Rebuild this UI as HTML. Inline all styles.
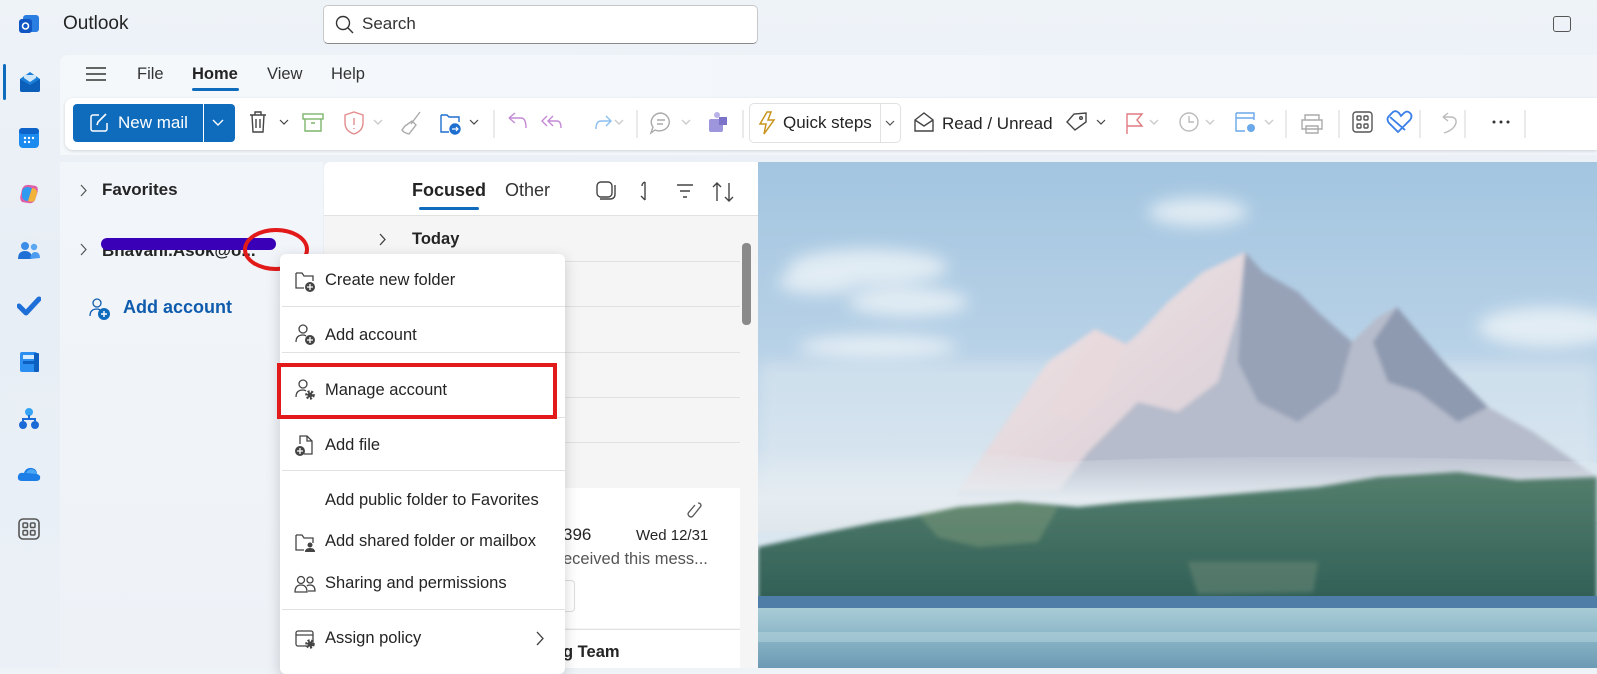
<!DOCTYPE html>
<html><head><meta charset="utf-8"><style>
*{box-sizing:border-box;margin:0;padding:0}
body{width:1597px;height:668px;overflow:hidden;position:relative;font-family:"Segoe UI","Liberation Sans",sans-serif;background:linear-gradient(180deg,#eef3f8,#e8eef5 40%,#eaf0f6);color:#242424}
.abs{position:absolute}
.rail svg{position:absolute}
.menu{left:280px;top:254px;width:285px;height:420px;background:#fff;border-radius:6px;box-shadow:0 4px 14px rgba(0,0,0,.18);}
.mi{position:absolute;left:0;width:285px;font-size:16.5px;color:#242424}
.mi span{position:absolute;left:45px}
.sep{position:absolute;left:2px;width:283px;height:1px;background:#e1e1e1}
.ic{position:absolute;left:14px}
</style></head><body>
<div class="abs" style="left:18px;top:14px;width:22px;height:22px">
<svg width="22" height="22"><rect x="5" y="1" width="16" height="17" rx="3" fill="#2a7de1"/><rect x="1" y="5" width="13" height="14" rx="3" fill="#0f56c2"/><circle cx="7.5" cy="12" r="3" fill="none" stroke="#fff" stroke-width="1.6"/></svg></div>
<div class="abs" style="left:63px;top:13px;font-size:19px;color:#242424">Outlook</div>
<div class="abs" style="left:323px;top:5px;width:435px;height:39px;background:#fff;border:1px solid #c8c8c8;border-bottom-color:#8a8a8a;border-radius:5px">
<svg class="abs" style="left:11px;top:9px" width="20" height="20"><circle cx="8" cy="8" r="6.5" fill="none" stroke="#333" stroke-width="1.4"/><line x1="12.8" y1="12.8" x2="18" y2="18" stroke="#333" stroke-width="1.4"/></svg>
<div class="abs" style="left:38px;top:8px;font-size:17px;color:#333">Search</div></div>
<div class="abs" style="left:1553px;top:16px;width:18px;height:16px;border:1.5px solid #555;border-radius:3px"></div>

<div class="rail">
<div class="abs" style="left:3px;top:64px;width:3px;height:36px;background:#0f6cbd;border-radius:2px"></div>
<svg style="left:18px;top:70px" width="24" height="24"><path d="M2 9 L12 2 L22 9 V20 a2 2 0 0 1-2 2 H4 a2 2 0 0 1-2-2Z" fill="#1a7fd8"/><path d="M2 9 L12 15 L22 9 V20 a2 2 0 0 1-2 2 H4 a2 2 0 0 1-2-2Z" fill="#0c5fb8"/><path d="M6 8 L12 12 L18 8 V5 H6Z" fill="#cfe6fb"/></svg>
<svg style="left:18px;top:127px" width="22" height="22"><rect x="1" y="1" width="20" height="20" rx="4" fill="#1c8bf0"/><rect x="1" y="1" width="20" height="6" rx="3" fill="#0d63c8"/><g fill="#fff"><circle cx="7" cy="11" r="1.2"/><circle cx="11" cy="11" r="1.2"/><circle cx="15" cy="11" r="1.2"/><circle cx="7" cy="15" r="1.2"/><circle cx="11" cy="15" r="1.2"/></g></svg>
<svg style="left:18px;top:183px" width="22" height="22"><path d="M4 6 Q6 1 12 2 L18 3 Q21 5 19 11 L17 17 Q15 21 10 20 L4 19 Q1 16 3 11Z" fill="#e05da8"/><path d="M4 10 Q4 4 10 4 L14 5 L10 18 Q5 18 4 14Z" fill="#2f9bf0"/><path d="M14 5 Q19 5 19 10 L17 17 Q15 20 10 18Z" fill="#f1b33b"/></svg>
<svg style="left:17px;top:240px" width="24" height="22"><circle cx="8" cy="6" r="4" fill="#3b8de8"/><circle cx="17" cy="7" r="3.2" fill="#5aa7f2"/><path d="M1 19 Q1 11 8 11 Q15 11 15 19Z" fill="#1e6fd6"/><path d="M13 19 Q14 12 18 12 Q23 12 23 18Z" fill="#4b9cf0"/></svg>
<svg style="left:17px;top:295px" width="24" height="22"><path d="M2 11 L9 18 L22 4" fill="none" stroke="#1f6fd9" stroke-width="5" stroke-linecap="round" stroke-linejoin="round"/></svg>
<svg style="left:19px;top:350px" width="22" height="24"><rect x="1" y="2" width="17" height="20" rx="2" fill="#2a8ff0"/><rect x="4" y="5" width="11" height="4" fill="#d7ecff"/><rect x="4" y="11" width="11" height="3" fill="#0d5fc0"/><rect x="15" y="3" width="5" height="19" rx="1" fill="#0d5fc0"/></svg>
<svg style="left:18px;top:407px" width="22" height="24"><circle cx="11" cy="5" r="4" fill="#36a3f5"/><circle cx="5" cy="18" r="4" fill="#1b6ad6"/><circle cx="17" cy="18" r="4" fill="#1b6ad6"/><path d="M11 8 V12 M5 14 V12 H17 V14" stroke="#1b6ad6" stroke-width="2" fill="none"/></svg>
<svg style="left:17px;top:466px" width="24" height="16"><path d="M5 15 Q0 15 1 10 Q2 6 7 7 Q9 1 15 2 Q20 3 20 8 Q24 9 23 13 Q22 15 19 15Z" fill="#1c7ee6"/><path d="M9 7 Q11 3 15 3 Q19 4 20 8" fill="#4aa7f5"/></svg>
<svg style="left:18px;top:518px" width="22" height="22"><rect x="1" y="1" width="20" height="20" rx="4" fill="none" stroke="#555" stroke-width="1.6"/><g fill="none" stroke="#555" stroke-width="1.5"><rect x="5" y="5" width="4.5" height="4.5" rx="1"/><rect x="12.5" y="5" width="4.5" height="4.5" rx="1"/><rect x="5" y="12.5" width="4.5" height="4.5" rx="1"/><rect x="12.5" y="12.5" width="4.5" height="4.5" rx="1"/></g></svg>
</div>

<div class="abs" style="left:60px;top:55px;width:1537px;height:100px;background:linear-gradient(90deg,#f5f8fb,#f1f5fa);border-radius:8px 0 0 0"></div>
<svg class="abs" style="left:85px;top:66px" width="22" height="16"><g stroke="#333" stroke-width="1.5"><line x1="1" y1="2" x2="21" y2="2"/><line x1="1" y1="8" x2="21" y2="8"/><line x1="1" y1="14" x2="21" y2="14"/></g></svg>
<div class="abs" style="left:137px;top:65px;font-size:16.5px;color:#333">File</div>
<div class="abs" style="left:192px;top:65px;font-size:16.5px;font-weight:bold;color:#242424">Home</div>
<div class="abs" style="left:192px;top:88px;width:47px;height:3px;background:#0f6cbd;border-radius:2px"></div>
<div class="abs" style="left:267px;top:65px;font-size:16.5px;color:#333">View</div>
<div class="abs" style="left:331px;top:65px;font-size:16.5px;color:#333">Help</div>

<div class="abs" style="left:65px;top:98px;width:1532px;height:52px;background:#fff;border-radius:8px 0 0 8px;box-shadow:0 1px 3px rgba(0,0,0,.15)"></div>
<div class="abs" style="left:73px;top:104px;width:162px;height:38px;background:#0f6cbd;border-radius:4px"></div>
<div class="abs" style="left:203px;top:104px;width:1px;height:38px;background:#fff"></div>
<svg class="abs" style="left:89px;top:113px" width="20" height="20"><path d="M10 2 H4 a2 2 0 0 0-2 2 V16 a2 2 0 0 0 2 2 H16 a2 2 0 0 0 2-2 V10" fill="none" stroke="#fff" stroke-width="1.5"/><path d="M8 12 L9 9 L17 1" stroke="#fff" stroke-width="1.6" fill="none"/></svg>
<div class="abs" style="left:118px;top:113px;font-size:17px;color:#fff">New mail</div>
<svg class="abs" style="left:212px;top:119px" width="12" height="8"><path d="M1 1 L6 6 L11 1" stroke="#fff" stroke-width="1.4" fill="none"/></svg>

<svg class="abs" style="left:245px;top:108px" width="510" height="32" fill="none" stroke-width="1.4">
<g stroke="#444"><path d="M5 7 H21 M10 7 V4 H16 V7 M7 7 L8 24 H18 L19 7 M11 11 V20 M15 11 V20"/><path d="M35 12 L39 16 L43 12" stroke-width="1.2"/></g>
<g stroke="#7cb66c"><rect x="58" y="6" width="20" height="5"/><path d="M60 11 V23 H76 V11 M66 15 H70"/></g>
<g stroke="#e38d8d"><path d="M100 7 L109 4 L118 7 V15 Q118 23 109 26 Q100 23 100 15Z"/><path d="M109 10 V17 M109 20 V21"/></g>
<path d="M129 12 L133 16 L137 12" stroke="#ccc"/>
<g stroke="#aaa"><path d="M175 4 L166 16 M160 18 L167 13 L171 17 L164 26 Q159 25 157 22Z"/></g>
<g stroke="#1f6fd0"><path d="M196 7 H202 L204 9 H214 V14 M196 7 V24 H204"/><circle cx="210" cy="21" r="5" fill="#1f6fd0"/><path d="M207 21 H213 M211 19 L213 21 L211 23" stroke="#fff" stroke-width="1.2"/></g>
<path d="M225 12 L229 16 L233 12" stroke="#444" stroke-width="1.2"/>
<line x1="249" y1="2" x2="249" y2="30" stroke="#e0e0e0"/>
<g stroke="#c48ad6"><path d="M264 10 L270 5 M264 10 L270 15 M264 10 H276 Q281 10 281 20"/><path d="M302 8 L297 13 L302 18 M308 8 L303 13 L308 18 M303 13 H312 Q316 13 316 20"/></g>
<g stroke="#8cbff0"><path d="M361 8 L366 13 L361 18 M366 13 H356 Q351 13 351 21"/></g>
<path d="M370 12 L374 16 L378 12" stroke="#ccc"/>
<line x1="392" y1="2" x2="392" y2="30" stroke="#e0e0e0"/>
<g stroke="#aaa"><path d="M416 5 A10 9 0 1 1 410 22 L406 25 L408 19 A10 9 0 0 1 416 5Z M412 12 H420 M412 16 H418"/></g>
<path d="M437 12 L441 16 L445 12" stroke="#ccc"/>
<g><circle cx="472" cy="7" r="3" fill="#b9b2e8"/><rect x="464" y="11" width="14" height="13" rx="2" fill="#9e96dc"/><rect x="474" y="9" width="8" height="8" fill="#7b72c9"/></g>
<line x1="498" y1="2" x2="498" y2="30" stroke="#e0e0e0"/>
</svg>
<div class="abs" style="left:749px;top:103px;width:152px;height:40px;border:1px solid #e1e1e1;border-radius:5px"></div>
<div class="abs" style="left:880px;top:103px;width:1px;height:40px;background:#e1e1e1"></div>
<svg class="abs" style="left:757px;top:111px" width="20" height="24"><path d="M10 1 L3 13 H9 L7 23 L17 9 H11 L14 1Z" fill="none" stroke="#c8941e" stroke-width="1.5"/></svg>
<div class="abs" style="left:783px;top:113px;font-size:17px;color:#242424">Quick steps</div>
<svg class="abs" style="left:885px;top:120px" width="10" height="7"><path d="M1 1 L5 5 L9 1" stroke="#555" stroke-width="1.2" fill="none"/></svg>
<svg class="abs" style="left:912px;top:110px" width="24" height="24"><path d="M3 10 L12 3 L21 10 V21 H3Z M3 10 L12 16 L21 10" fill="none" stroke="#444" stroke-width="1.4"/></svg>
<div class="abs" style="left:942px;top:114px;font-size:17px;color:#242424">Read / Unread</div>
<svg class="abs" style="left:1065px;top:108px" width="480" height="32" fill="none" stroke-width="1.4">
<path d="M10 22 L2 14 L9 6 L21 5 L21 14Z" stroke="#444"/><circle cx="16" cy="10" r="1.3" stroke="#444"/>
<path d="M32 12 L36 16 L40 12" stroke="#444" stroke-width="1.2"/>
<path d="M62 26 V6 H77 L72 12 L77 18 H62" stroke="#e07a82"/>
<path d="M85 12 L89 16 L93 12" stroke="#ccc"/>
<circle cx="124" cy="14" r="9" stroke="#bbb"/><path d="M124 8 V14 H129" stroke="#bbb"/>
<path d="M141 12 L145 16 L149 12" stroke="#ccc"/>
<path d="M171 5 H189 V12 M171 5 V23 H180 M171 10 H189" stroke="#6aa9ea"/><circle cx="186" cy="20" r="4" fill="#6aa9ea"/>
<path d="M200 12 L204 16 L208 12" stroke="#ccc"/>
<line x1="221" y1="2" x2="221" y2="30" stroke="#e0e0e0"/>
<path d="M240 12 V7 H254 V12 M237 12 H257 V21 H237Z M241 18 H253 V25 H241Z" stroke="#aaa"/>
<line x1="274" y1="2" x2="274" y2="30" stroke="#e0e0e0"/>
<rect x="288" y="4" width="19" height="20" rx="3" stroke="#555"/><g stroke="#555"><rect x="292" y="8" width="4" height="4" rx="1"/><rect x="299" y="8" width="4" height="4" rx="1"/><rect x="292" y="16" width="4" height="4" rx="1"/><rect x="299" y="16" width="4" height="4" rx="1"/></g>
<path d="M333 24 L324 15 Q321 11 324 8 L328 4 Q331 2 334 5 L336 8 L339 5 Q342 2 345 5 Q348 8 345 12Z M325 9 L340 22" stroke="#3a7ee8" stroke-width="1.8"/>
<line x1="355" y1="2" x2="355" y2="30" stroke="#e0e0e0"/>
<path d="M378 9 L383 5 M378 9 L383 13 M378 9 H385 Q392 9 391 15 Q389 22 379 25" stroke="#bbb"/>
<line x1="400" y1="2" x2="400" y2="30" stroke="#e0e0e0"/>
<g fill="#333" stroke="none"><circle cx="429" cy="14" r="1.5"/><circle cx="436" cy="14" r="1.5"/><circle cx="443" cy="14" r="1.5"/></g>
<line x1="460" y1="2" x2="460" y2="30" stroke="#e0e0e0"/>
</svg>

<div class="abs" style="left:60px;top:162px;width:263px;height:506px;background:linear-gradient(180deg,#f2f6fa,#eef2f7)"></div>
<svg class="abs" style="left:80px;top:184px" width="8" height="13"><path d="M1 1 L6 6.5 L1 12" stroke="#555" stroke-width="1.2" fill="none"/></svg>
<div class="abs" style="left:102px;top:180px;font-size:17px;font-weight:bold;color:#242424">Favorites</div>
<svg class="abs" style="left:80px;top:243px" width="8" height="13"><path d="M1 1 L6 6.5 L1 12" stroke="#555" stroke-width="1.2" fill="none"/></svg>
<div class="abs" style="left:102px;top:241px;font-size:17px;font-weight:bold;color:#242424">Bhavani.Asok@o...</div>
<div class="abs" style="left:101px;top:238px;width:175px;height:12px;background:#3a00b8;border-radius:6px"></div>
<div class="abs" style="left:243px;top:228px;width:66px;height:43px;border:4px solid #e21a1a;border-radius:50%"></div>
<svg class="abs" style="left:88px;top:297px" width="24" height="24"><circle cx="9" cy="6" r="4" fill="none" stroke="#0f5cad" stroke-width="1.3"/><path d="M2 19 Q2 12 9 12 Q11 12 12 13" fill="none" stroke="#0f5cad" stroke-width="1.3"/><circle cx="16" cy="17" r="6" fill="#0f6cbd"/><path d="M16 14 V20 M13 17 H19" stroke="#fff" stroke-width="1.4"/></svg>
<div class="abs" style="left:123px;top:297px;font-size:18px;font-weight:bold;color:#0f5cad">Add account</div>

<div class="abs" style="left:324px;top:162px;width:434px;height:506px;background:#f5f5f5;border-radius:6px 0 0 0"></div>
<div class="abs" style="left:324px;top:162px;width:434px;height:54px;background:#fff;border-bottom:1px solid #e1e1e1;border-radius:6px 0 0 0"></div>
<div class="abs" style="left:412px;top:180px;font-size:18px;font-weight:bold;color:#242424">Focused</div>
<div class="abs" style="left:419px;top:207px;width:60px;height:3px;background:#0f6cbd;border-radius:2px"></div>
<div class="abs" style="left:505px;top:180px;font-size:18px;color:#333">Other</div>
<svg class="abs" style="left:595px;top:180px" width="150" height="24" fill="none" stroke="#444" stroke-width="1.4"><rect x="2" y="2" width="15" height="15" rx="4"/><path d="M5 19 H15 Q20 19 20 14 V5"/><path d="M50 2 V20 M46 16 L50 20 M50 2 Q47 3 47 6" /><path d="M82 5 H98 M85 11 H95 M88 17 H92"/><path d="M122 3 V21 M118 7 L122 3 L126 7 M134 3 V21 M130 17 L134 21 L138 17"/></svg>
<svg class="abs" style="left:379px;top:233px" width="8" height="13"><path d="M1 1 L6 6.5 L1 12" stroke="#444" stroke-width="1.3" fill="none"/></svg>
<div class="abs" style="left:412px;top:230px;font-size:16.5px;font-weight:bold;color:#242424">Today</div>
<div class="abs" style="left:565px;top:261px;width:175px;height:1px;background:#e1e1e1"></div>
<div class="abs" style="left:565px;top:306px;width:175px;height:1px;background:#e1e1e1"></div>
<div class="abs" style="left:565px;top:352px;width:175px;height:1px;background:#e1e1e1"></div>
<div class="abs" style="left:565px;top:397px;width:175px;height:1px;background:#e1e1e1"></div>
<div class="abs" style="left:565px;top:442px;width:175px;height:1px;background:#e1e1e1"></div>
<div class="abs" style="left:742px;top:243px;width:9px;height:82px;background:#8a8a8a;border-radius:4px"></div>
<div class="abs" style="left:565px;top:488px;width:175px;height:140px;background:#fff"></div>
<div class="abs" style="left:565px;top:629px;width:175px;height:39px;background:#fff;border-top:1px solid #e1e1e1"></div>
<svg class="abs" style="left:684px;top:500px" width="20" height="20"><path d="M14 3 Q17 3 17 6 L9 16 Q7 18 5 16 Q3 14 5 12 L11 5" fill="none" stroke="#555" stroke-width="1.3"/></svg>
<div class="abs" style="left:563px;top:525px;font-size:17px;color:#242424">396</div>
<div class="abs" style="left:636px;top:527px;font-size:15px;color:#242424">Wed 12/31</div>
<div class="abs" style="left:563px;top:550px;font-size:16.5px;color:#555">eceived this mess...</div>
<div class="abs" style="left:560px;top:580px;width:15px;height:32px;border:1px solid #ddd;border-left:none;border-radius:0 4px 4px 0"></div>
<div class="abs" style="left:563px;top:643px;font-size:16.5px;font-weight:bold;color:#242424">g Team</div>

<svg class="abs" style="left:758px;top:162px" width="839" height="506" viewBox="0 0 839 506">
<defs>
<linearGradient id="sky" x1="0" y1="0" x2="0" y2="1"><stop offset="0" stop-color="#a3c5e0"/><stop offset=".45" stop-color="#bcd4e8"/><stop offset=".75" stop-color="#dbe7f0"/></linearGradient>
<linearGradient id="lf" x1="0" y1="0" x2="1" y2="1"><stop offset="0" stop-color="#f3e6e6"/><stop offset="1" stop-color="#d7cdd6"/></linearGradient>
<linearGradient id="lake" x1="0" y1="0" x2="0" y2="1"><stop offset="0" stop-color="#a9ccd6"/><stop offset=".4" stop-color="#8fb9c9"/><stop offset="1" stop-color="#6d9ab4"/></linearGradient>
<linearGradient id="fog" x1="0" y1="0" x2="0" y2="1"><stop offset="0" stop-color="#e6edf2" stop-opacity="0"/><stop offset=".6" stop-color="#e6edf2" stop-opacity=".95"/><stop offset="1" stop-color="#dfe7ec"/></linearGradient>
<linearGradient id="for" x1="0" y1="0" x2="0" y2="1"><stop offset="0" stop-color="#557f6e"/><stop offset="1" stop-color="#2f5e55"/></linearGradient>
<filter id="bl"><feGaussianBlur stdDeviation="8"/></filter>
<filter id="bl2"><feGaussianBlur stdDeviation="2"/></filter>
</defs>
<rect width="839" height="506" fill="url(#sky)"/>
<g fill="#eef4f8" opacity=".8" filter="url(#bl)"><ellipse cx="110" cy="105" rx="80" ry="18"/><ellipse cx="150" cy="140" rx="60" ry="14"/><ellipse cx="790" cy="165" rx="70" ry="20"/><ellipse cx="440" cy="50" rx="50" ry="14"/><ellipse cx="60" cy="120" rx="40" ry="12"/><ellipse cx="120" cy="185" rx="80" ry="12"/></g>
<rect x="0" y="200" width="839" height="140" fill="#e3ecf2" opacity=".5" filter="url(#bl)"/>
<g filter="url(#bl2)">
<path d="M200 330 L255 250 L290 200 L337 167 L368 182 L380 172 L410 140 L445 110 L487 90 L505 110 L540 130 L560 150 L594 180 L620 155 L639 145 L660 170 L690 205 L730 245 L775 270 L839 315 L839 360 L200 360Z" fill="#b6bccb"/>
<path d="M200 330 L255 250 L290 200 L337 167 L368 182 L380 172 L410 140 L445 110 L487 90 L480 150 L460 220 L420 250 L380 240 L330 290 L300 330Z" fill="url(#lf)"/>
<path d="M487 90 L505 110 L540 130 L560 150 L594 180 L580 230 L540 260 L500 240 L480 200Z" fill="#97a2b7"/>
<path d="M639 145 L660 170 L690 205 L730 245 L700 260 L660 230 L630 220 L615 180Z" fill="#8e9ab0"/>
<path d="M337 167 L368 182 L350 230 L320 260 L290 250Z" fill="#e8d9dc" opacity=".7"/>
</g>
<path d="M0 290 Q200 280 300 300 Q500 290 839 300 L839 360 L0 370Z" fill="url(#fog)"/>
<g filter="url(#bl2)">
<path d="M0 385 L60 372 L120 360 L170 352 L200 345 L260 340 L320 345 L370 340 L440 335 L500 330 L560 325 L620 315 L700 310 L760 318 L839 315 L839 445 L0 445Z" fill="url(#for)"/>
<path d="M160 352 L200 345 L260 340 L300 345 L280 380 L220 385 L180 375Z" fill="#7e9a7a" opacity=".5"/>
<path d="M430 400 L560 400 L555 430 L440 432Z" fill="#6d8c7a" opacity=".5"/>
</g>
<rect y="434" width="839" height="12" fill="#4e7ea8"/>
<rect y="446" width="839" height="60" fill="url(#lake)"/>
<rect y="470" width="839" height="10" fill="#b8d5de" opacity=".5"/>
</svg>

<div class="abs menu">
<svg class="ic" style="top:16px" width="24" height="24"><path d="M2 3 H8 L10 6 H19 V11 M2 3 V18 H10" fill="none" stroke="#444" stroke-width="1.3"/><circle cx="16" cy="17" r="5" fill="#444"/><path d="M16 14 V20 M13 17 H19" stroke="#fff" stroke-width="1.3"/></svg>
<div class="mi" style="top:17px"><span>Create new folder</span></div>
<div class="sep" style="top:52px"></div>
<svg class="ic" style="top:70px" width="24" height="24"><circle cx="9" cy="5" r="4" fill="none" stroke="#444" stroke-width="1.3"/><path d="M2 18 Q2 11 9 11 Q11 11 12 12" fill="none" stroke="#444" stroke-width="1.3"/><circle cx="16" cy="16" r="5" fill="#444"/><path d="M16 13 V19 M13 16 H19" stroke="#fff" stroke-width="1.3"/></svg>
<div class="mi" style="top:72px"><span>Add account</span></div>
<div class="sep" style="top:98px"></div>
<svg class="ic" style="top:125px" width="24" height="24"><circle cx="9" cy="5" r="4" fill="none" stroke="#444" stroke-width="1.3"/><path d="M2 18 Q2 11 9 11 Q11 11 12 12" fill="none" stroke="#444" stroke-width="1.3"/><circle cx="16" cy="16" r="3.5" fill="none" stroke="#444" stroke-width="2.5" stroke-dasharray="2 1.5"/><circle cx="16" cy="16" r="2.5" fill="#444"/></svg>
<div class="mi" style="top:127px"><span>Manage account</span></div>
<div class="sep" style="top:163px"></div>
<svg class="ic" style="top:180px" width="24" height="24"><path d="M6 10 V2 H13 L18 7 V20 H10 M13 2 V7 H18" fill="none" stroke="#444" stroke-width="1.3"/><circle cx="6" cy="17" r="5" fill="#444"/><path d="M6 14 V20 M3 17 H9" stroke="#fff" stroke-width="1.3"/></svg>
<div class="mi" style="top:182px"><span>Add file</span></div>
<div class="sep" style="top:216px"></div>
<div class="mi" style="top:237px"><span>Add public folder to Favorites</span></div>
<svg class="ic" style="top:278px" width="24" height="24"><path d="M2 3 H8 L10 6 H19 V11 M2 3 V18 H10" fill="none" stroke="#444" stroke-width="1.3"/><circle cx="16" cy="13" r="2.5" fill="#444"/><path d="M11 20 Q11 16 16 16 Q21 16 21 20Z" fill="#444"/></svg>
<div class="mi" style="top:278px"><span>Add shared folder or mailbox</span></div>
<svg class="ic" style="top:320px" width="24" height="24"><circle cx="7" cy="6" r="3.5" fill="none" stroke="#444" stroke-width="1.3"/><circle cx="16" cy="6" r="3" fill="none" stroke="#444" stroke-width="1.3"/><path d="M1 18 Q1 11 7 11 Q13 11 13 18Z M13 12 Q14 11 16 11 Q21 11 21 17 H14" fill="none" stroke="#444" stroke-width="1.3"/></svg>
<div class="mi" style="top:320px"><span>Sharing and permissions</span></div>
<div class="sep" style="top:355px"></div>
<svg class="ic" style="top:374px" width="24" height="24"><rect x="2" y="3" width="17" height="15" rx="2" fill="none" stroke="#444" stroke-width="1.3"/><line x1="2" y1="7" x2="19" y2="7" stroke="#444" stroke-width="1.3"/><circle cx="16" cy="16" r="3.5" fill="none" stroke="#444" stroke-width="2.5" stroke-dasharray="2 1.5"/><circle cx="16" cy="16" r="2.5" fill="#444"/></svg>
<div class="mi" style="top:375px"><span>Assign policy</span></div>
<svg class="abs" style="left:256px;top:377px" width="9" height="15"><path d="M1 1 L7 7.5 L1 14" stroke="#444" stroke-width="1.3" fill="none"/></svg>
</div>
<div class="abs" style="left:277px;top:363px;width:280px;height:56px;border:4px solid #e21a1a"></div>
</body></html>
